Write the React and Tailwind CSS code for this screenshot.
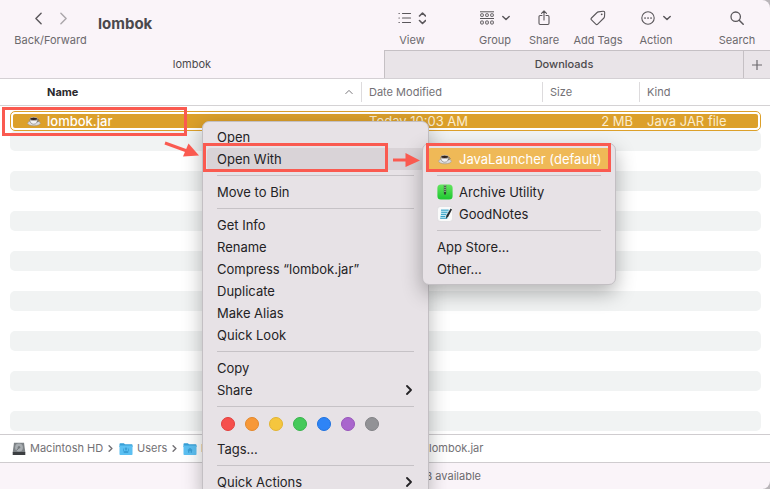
import React from "react";

function Chevron({ dir = "right", className = "", w = 2 }) {
  const d = {
    right: "M3 1l4 4-4 4",
    left: "M7 1L3 5l4 4",
    down: "M1 3l4 4 4-4",
    up: "M1 7l4-4 4 4",
  }[dir];
  return (
    <svg viewBox="0 0 10 10" className={className} fill="none" stroke="currentColor" strokeWidth={w} strokeLinecap="round" strokeLinejoin="round" aria-hidden="true">
      <path d={d} />
    </svg>
  );
}

function Coffee({ className = "" }) {
  return (
    <svg viewBox="0 0 14 14" className={className} aria-hidden="true">
      <ellipse cx="7" cy="9.200" rx="6.300" ry="2.600" fill="#dcdce0" stroke="#8f8b88" strokeWidth=".5" />
      <path d="M2.800 5.200c0 3.200 1.400 5 3.900 5s3.900-1.800 3.900-5z" fill="#f3f3f5" stroke="#77726e" strokeWidth=".6" />
      <path d="M10.600 5.600c2-.4 2.200 1.900-.7 2.200" fill="none" stroke="#6b6662" strokeWidth=".8" />
      <ellipse cx="6.700" cy="4.900" rx="3.900" ry="1.600" fill="#2e211b" stroke="#d6d3d3" strokeWidth=".6" />
    </svg>
  );
}

function ViewIcon() {
  return (
    <svg viewBox="0 0 28 14" className="h-[14px] w-7" fill="none" stroke="currentColor" strokeWidth="1.200" strokeLinecap="round" strokeLinejoin="round" aria-hidden="true">
      <path d="M4.500 2.500h8M4.500 7h8M4.500 11.500h8M1 2.500h.3M1 7h.3M1 11.500h.3" />
      <path d="M21.500 5l3-3 3 3M21.500 9.500l3 3 3-3" strokeWidth="1.600" />
    </svg>
  );
}

function GroupIcon() {
  return (
    <svg viewBox="0 0 14 14" className="h-[14px] w-[14px]" fill="none" stroke="currentColor" strokeWidth="1" aria-hidden="true">
      <path d="M0 .8h14M0 7.500h14" />
      <rect x=".7" y="2.800" width="2.600" height="2.600" rx=".5" />
      <rect x="5.700" y="2.800" width="2.600" height="2.600" rx=".5" />
      <rect x="10.700" y="2.800" width="2.600" height="2.600" rx=".5" />
      <rect x=".7" y="10" width="2.600" height="3" rx=".5" />
      <rect x="5.700" y="10" width="2.600" height="3" rx=".5" />
      <rect x="10.700" y="10" width="2.600" height="3" rx=".5" />
    </svg>
  );
}

function ShareIcon() {
  return (
    <svg viewBox="0 0 12 16" className="h-4 w-3" fill="none" stroke="currentColor" strokeWidth="1.100" strokeLinecap="round" strokeLinejoin="round" aria-hidden="true">
      <path d="M4 5.500H2.200a1.200 1.200 0 0 0-1.200 1.200v6.600a1.200 1.200 0 0 0 1.200 1.200h7.600a1.200 1.200 0 0 0 1.200-1.200V6.700a1.200 1.200 0 0 0-1.200-1.200H8M6 10V1M3.500 3.400L6 .9l2.500 2.500" />
    </svg>
  );
}

function TagIcon() {
  return (
    <svg viewBox="0 0 16 16" className="h-4 w-4" fill="none" stroke="currentColor" strokeWidth="1.100" strokeLinejoin="round" aria-hidden="true">
      <path d="M8.400 1.900l4.600-.7c1-.1 1.700.5 1.700 1.500l-.2 3.900c0 .6-.2 1-.6 1.400l-6.200 6.200c-.6.6-1.300.6-1.900 0L1.500 9.900c-.6-.6-.6-1.300 0-1.900l5.600-5.500c.4-.4.8-.5 1.300-.6z" />
      <circle cx="11.700" cy="4.300" r=".9" fill="currentColor" stroke="none" />
    </svg>
  );
}

function ActionIcon() {
  return (
    <svg viewBox="0 0 14 14" className="h-[14px] w-[14px]" fill="none" stroke="currentColor" strokeWidth="1.100" aria-hidden="true">
      <circle cx="7" cy="7" r="6.200" />
      <path d="M4 7h.1M7 7h.1M10 7h.1" strokeWidth="1.700" strokeLinecap="round" />
    </svg>
  );
}

function SearchIcon() {
  return (
    <svg viewBox="0 0 14 14" className="h-[14px] w-[14px]" fill="none" stroke="currentColor" strokeWidth="1.300" strokeLinecap="round" aria-hidden="true">
      <circle cx="5.700" cy="5.700" r="4.700" />
      <path d="M9.200 9.200l4 4" strokeWidth="1.500" />
    </svg>
  );
}

function DriveIcon() {
  return (
    <svg viewBox="0 0 14 14" className="h-[14px] w-[14px] shrink-0" aria-hidden="true">
      <path d="M2 .7h10l1.300 9.500H.7z" fill="#7d8286" />
      <path d="M.7 10h12.600v3H.7z" fill="#3b3e41" />
      <circle cx="7" cy="5.500" r="3.900" fill="#a9aeb2" />
      <circle cx="7" cy="5.200" r="1.300" fill="#7d8286" />
      <path d="M7 5.500L4.500 8.500" stroke="#5d6165" strokeWidth=".8" />
    </svg>
  );
}

function FolderIcon({ home }) {
  return (
    <svg viewBox="0 0 14 14" className="h-[14px] w-[14px] shrink-0" aria-hidden="true">
      <path d="M.5 2c0-.5.3-.8.8-.8h3.500l1.200 1h6.700c.5 0 .8.300.8.800V5H.5z" fill="#37a0d8" />
      <rect x=".5" y="3.400" width="13" height="9.600" rx=".8" fill="#5cc0f2" />
      {home ? (
        <path d="M4.200 8.200L7 5.700l2.800 2.500h-.8v2.600H7.600V9H6.400v1.800H5V8.200z" fill="#3a9fd6" />
      ) : (
        <path d="M7 5.400a1.300 1.300 0 1 1 0 2.600 1.300 1.300 0 0 1 0-2.600zM4.600 11c0-3.300 4.800-3.300 4.800 0zM4.200 6.500h.8v3h-.8zM9 6.500h.8v3H9z" fill="#3a9fd6" />
      )}
    </svg>
  );
}

function ZipIcon() {
  return (
    <svg viewBox="0 0 16 16" className="h-4 w-4" aria-hidden="true">
      <defs>
        <linearGradient id="zip" x2="0" y2="1">
          <stop stopColor="#65e560" />
          <stop offset="1" stopColor="#1cc62f" />
        </linearGradient>
      </defs>
      <rect x=".4" y=".4" width="15.200" height="15.200" rx="3.500" fill="url(#zip)" />
      <path d="M8 1v8.500" stroke="#4c6a4c" strokeWidth="2.400" />
      <path d="M8 1v7" stroke="#b5c9b5" strokeWidth="1" strokeDasharray="1 1" />
      <path d="M7 8h2v2.500H7z" fill="#2c4a2e" />
    </svg>
  );
}

function NotesIcon() {
  return (
    <svg viewBox="0 0 16 16" className="h-4 w-4" aria-hidden="true">
      <rect x=".4" y=".4" width="15.200" height="15.200" rx="3.500" fill="#fafafa" stroke="#d5d3d6" strokeWidth=".5" />
      <path d="M4 3.200h8.300L10.800 12.500H3z" fill="#c9ebf6" />
      <path d="M4 4.200h7.500M4.200 6.300h6.300M4 8.400h5.300M3.600 10.500h4.600M3.200 12.300h7" stroke="#2599bf" strokeWidth=".9" />
      <path d="M13.600 2.600l1.400.9-3.800 7.200-2.200 1.900.3-2.800z" fill="#25292c" />
    </svg>
  );
}

function Tool({ label, children, className = "" }) {
  return (
    <button type="button" className={"flex flex-col items-center whitespace-nowrap text-[11px] leading-4 text-[#6c696d] " + className}>
      <span className="flex h-5 items-center justify-center gap-2 text-[#5a575b]">{children}</span>
      <span className="mt-1">{label}</span>
    </button>
  );
}

const COLS = "grid grid-cols-[1fr_181px_97px_122px]";

function FileTable() {
  return (
    <table className="block min-h-0 flex-1 overflow-hidden bg-white">
      <thead className="block border-b border-[#d4d2d4] text-[11px] leading-[26px] text-[#737175]">
        <tr className={COLS + " mr-[9px] ml-[10px] h-[26px] items-center"}>
          <th scope="col" className="flex items-center justify-between pr-2 pl-[37px] text-left font-bold text-[#2b292c]">
            Name
            <Chevron dir="up" w={1.2} className="h-2 w-2 text-[#737175]" />
          </th>
          <th scope="col" className="h-5 border-l border-[#dddbdd] pl-[7px] text-left leading-5 font-normal">Date Modified</th>
          <th scope="col" className="h-5 border-l border-[#dddbdd] pl-[7px] text-left leading-5 font-normal">Size</th>
          <th scope="col" className="h-5 border-l border-[#dddbdd] pl-[7px] text-left leading-5 font-normal">Kind</th>
        </tr>
      </thead>
      <tbody className="block pt-[5px] pr-[9px] pl-[10px]">
        <tr className="grid h-5 grid-cols-[1fr_181px_97px_119px] items-center rounded-[5px] border border-[#dca02a] bg-[#dca02a] bg-clip-content p-[2px] text-[13px] leading-[14px] text-[#fbedcf]">
          <td className="flex items-center gap-[6px] pl-[14px] font-medium text-white">
            <Coffee className="h-[14px] w-[14px]" />
            lombok.jar
          </td>
          <td className="pl-2">Today 10:03 AM</td>
          <td className="pr-[6px] text-right">2 MB</td>
          <td className="pl-2">Java JAR file</td>
        </tr>
        {Array.from({ length: 15 }, (_, i) => (
          <tr key={i} className="block h-5 rounded-[5px] odd:bg-white even:bg-[#f1f3f3]">
            <td />
          </tr>
        ))}
      </tbody>
    </table>
  );
}

function Item({ children, arrow, className = "" }) {
  return (
    <button type="button" role="menuitem" className={"flex h-[22px] w-full items-center justify-between rounded-[4px] px-[10px] text-left whitespace-nowrap " + className}>
      <span className="flex items-center gap-[6px]">{children}</span>
      {arrow && <Chevron className="h-[10px] w-[10px]" w={1.8} />}
    </button>
  );
}

function Separator() {
  return <div role="separator" className="mx-[10px] my-[5px] h-px bg-[#c6c2c6]" />;
}

const TAGS = [
  ["Red", "bg-[#f64f4c] border-[#e23f3d]"],
  ["Orange", "bg-[#f79838] border-[#e3882b]"],
  ["Yellow", "bg-[#f5c63e] border-[#e2b431]"],
  ["Green", "bg-[#45c95a] border-[#37b44b]"],
  ["Blue", "bg-[#2e84f6] border-[#2072df]"],
  ["Purple", "bg-[#a966cd] border-[#9855bb]"],
  ["Grey", "bg-[#929296] border-[#828286]"],
];

const MENU = "absolute rounded-[7px] border border-[#c3bfc3] bg-[#e7e2e6] px-1 py-1 text-[13px] leading-4 text-[#242225]";

function ContextMenu() {
  return (
    <div role="menu" className={MENU + " top-[121px] left-[202px] w-[227px] shadow-[0_6px_20px_rgba(0,0,0,0.28)]"}>
      <Item>Open</Item>
      <Item className="bg-[#d9d3d7]">Open With</Item>
      <Separator />
      <Item>Move to Bin</Item>
      <Separator />
      <Item>Get Info</Item>
      <Item>Rename</Item>
      <Item>Compress “lombok.jar”</Item>
      <Item>Duplicate</Item>
      <Item>Make Alias</Item>
      <Item>Quick Look</Item>
      <Separator />
      <Item>Copy</Item>
      <Item arrow>Share</Item>
      <Separator />
      <div className="flex h-[26px] items-center gap-[10px] pb-[2px] pl-[14px]">
        {TAGS.map(([name, color]) => (
          <button key={name} type="button" aria-label={name} className={"h-[14px] w-[14px] rounded-full border " + color} />
        ))}
      </div>
      <Item>Tags...</Item>
      <Separator />
      <Item arrow>Quick Actions</Item>
    </div>
  );
}

function OpenWithMenu() {
  return (
    <div role="menu" className={MENU + " top-[143px] left-[422px] w-[194px] shadow-[0_8px_20px_rgba(0,0,0,0.3)]"}>
      <Item className="bg-[#efb957] text-white">
        <span className="flex w-4 justify-center"><Coffee className="h-[14px] w-[14px]" /></span>
        JavaLauncher (default)
      </Item>
      <Separator />
      <Item><ZipIcon />Archive Utility</Item>
      <Item><NotesIcon />GoodNotes</Item>
      <Separator />
      <Item>App Store...</Item>
      <Item>Other...</Item>
    </div>
  );
}

function Annotations() {
  return (
    <div className="pointer-events-none">
      <div className="absolute top-[107px] left-[2px] h-[29px] w-[185px] border-[3px] border-[#fa5a50]" />
      <div className="absolute top-[143px] left-[203px] h-[29px] w-[185px] border-[3px] border-[#fa5a50]" />
      <div className="absolute top-[143px] left-[426px] h-[29px] w-[185px] border-[3px] border-[#fa5a50]" />
      <svg viewBox="0 0 36 20" className="absolute top-[140px] left-[164px] h-5 w-9" aria-hidden="true">
        <path d="M1 3l22 8" stroke="#fa5a50" strokeWidth="3" />
        <path d="M24.500 3.500L35 15.500l-16 1z" fill="#fa5a50" />
      </svg>
      <svg viewBox="0 0 28 16" className="absolute top-[152px] left-[393px] h-4 w-7" aria-hidden="true">
        <path d="M0 8h14" stroke="#fa5a50" strokeWidth="3" />
        <path d="M12.500 1L27 8.500l-14.500 6.500z" fill="#fa5a50" />
      </svg>
    </div>
  );
}

export default function App() {
  return (
    <div className="relative h-screen overflow-hidden bg-[#b9b5b9] font-[Inter,'Liberation_Sans',sans-serif]">
      <div className="flex h-full flex-col overflow-hidden rounded-r-[8px] bg-[#faf4f9]">
        <header className="flex h-[50px] shrink-0 items-start pt-2 pr-[13px] pl-[15px]">
          <div className="flex w-[71px] flex-col items-center text-[11px] leading-4 text-[#6c696d]">
            <div className="flex h-5 items-center gap-3 text-[#5a575b]">
              <button type="button" aria-label="Back"><Chevron dir="left" w={1.1} className="h-[13px] w-[13px]" /></button>
              <button type="button" aria-label="Forward"><Chevron w={1.1} className="h-[13px] w-[13px] text-[#aaa6aa]" /></button>
            </div>
            <span className="mt-1">Back/Forward</span>
          </div>
          <h1 className="ml-3 pt-[6px] text-[15px] leading-5 font-bold text-[#4b494c]">lombok</h1>
          <Tool label="View" className="ml-auto w-10"><ViewIcon /></Tool>
          <Tool label="Group" className="ml-[43px] w-10"><GroupIcon /><Chevron dir="down" w={1.8} className="h-2 w-2" /></Tool>
          <Tool label="Share" className="ml-[9px] w-10"><ShareIcon /></Tool>
          <Tool label="Add Tags" className="ml-2 w-[52px]"><TagIcon /></Tool>
          <Tool label="Action" className="ml-3 w-10"><ActionIcon /><Chevron dir="down" w={1.8} className="h-2 w-2" /></Tool>
          <Tool label="Search" className="ml-[41px] w-10"><SearchIcon /></Tool>
        </header>

        <div role="tablist" className="flex h-[29px] shrink-0 border-b border-[#d4d0d4] text-[11px] text-[#4b494c]">
          <button type="button" role="tab" aria-selected="true" className="w-[calc(50%-1px)]">lombok</button>
          <button type="button" role="tab" aria-selected="false" className="flex-1 border-t border-l border-[#c5c0c4] bg-[#e9e4e8] font-medium">Downloads</button>
          <button type="button" aria-label="New tab" className="flex w-[27px] items-center justify-center border-t border-l border-[#c5c0c4] bg-[#e9e4e8] text-[#6c696d]">
            <svg viewBox="0 0 10 10" className="h-[10px] w-[10px]" stroke="currentColor" strokeWidth="1.200" aria-hidden="true"><path d="M5 0v10M0 5h10" /></svg>
          </button>
        </div>

        <FileTable />

        <nav aria-label="Path" className="flex h-[29px] shrink-0 items-center border-y border-[#cfcccf] bg-white pl-3 text-[11px] whitespace-nowrap text-[#737175]">
          <DriveIcon />
          <a href="#hd" className="ml-1 w-[77px]">Macintosh HD</a>
          <Chevron className="h-[7px] w-[7px]" />
          <a href="#users" className="ml-[5px] flex w-[52px] items-center gap-1"><FolderIcon />Users</a>
          <Chevron className="h-[7px] w-[7px]" />
          <a href="#home" className="ml-[5px] flex w-[246px] items-center gap-1"><FolderIcon home />l</a>
          <a href="#file">lombok.jar</a>
        </nav>
        <footer className="h-[26px] shrink-0 text-[11px] leading-[26px] text-[#6c696d]">
          <p className="w-[481px] text-right">GB available</p>
        </footer>
      </div>

      <ContextMenu />
      <OpenWithMenu />
      <Annotations />
    </div>
  );
}
